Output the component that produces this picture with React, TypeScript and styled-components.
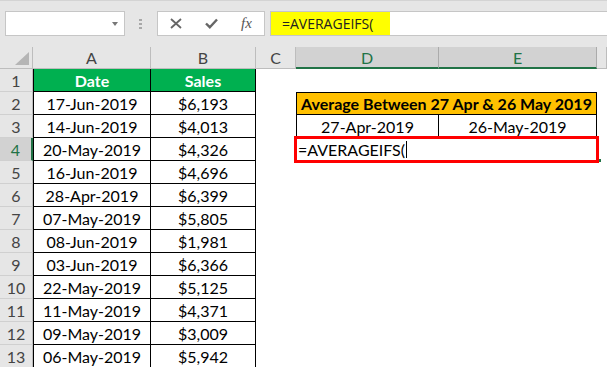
import React from 'react';
import styled, { createGlobalStyle, css } from 'styled-components';

// =============================================================================
// Data
// =============================================================================

const SALES: [string, string][] = [
  ['17-Jun-2019', '$6,193'],
  ['14-Jun-2019', '$4,013'],
  ['20-May-2019', '$4,326'],
  ['16-Jun-2019', '$4,696'],
  ['28-Apr-2019', '$6,399'],
  ['07-May-2019', '$5,805'],
  ['08-Jun-2019', '$1,981'],
  ['03-Jun-2019', '$6,366'],
  ['22-May-2019', '$5,125'],
  ['11-May-2019', '$4,371'],
  ['09-May-2019', '$3,009'],
  ['06-May-2019', '$5,942'],
];

const GREEN = '#217346';
const GRID = '#bdbdbd';
const CELL_FONT = 'Lato, "Liberation Sans", sans-serif';

// =============================================================================
// Styled Components
// =============================================================================

const GlobalStyle = createGlobalStyle`
  html, body {
    margin: 0;
    padding: 0;
    background: #fff;
    overflow: hidden;
  }
  body {
    font-family: ${CELL_FONT};
  }
`;

const Page = styled.div`
  width: 607px;
  height: 367px;
  overflow: hidden;
  display: flex;
  flex-direction: column;
`;

const Toolbar = styled.div`
  flex: none;
  height: 47px;
  box-sizing: border-box;
  background: #e6e6e6;
  border-top: 1px solid #d4d4d4;
  display: flex;
  align-items: flex-start;
  padding: 10px 0 0 5px;
`;

const Box = styled.div`
  height: 25px;
  box-sizing: border-box;
  background: #fff;
  border: 1px solid #c6c6c6;
  display: flex;
  align-items: center;
`;

const NameBox = styled(Box)`
  width: 120px;
  justify-content: flex-end;
  padding-right: 6px;
`;

const DropArrow = styled.div`
  width: 0;
  height: 0;
  border-left: 3.5px solid transparent;
  border-right: 3.5px solid transparent;
  border-top: 4px solid #777;
`;

const Dots = styled.div`
  display: flex;
  flex-direction: column;
  gap: 2px;
  margin: 8px 15px 0 14px;
  & > span {
    width: 3px;
    height: 2px;
    background: #a8a8a8;
  }
`;

const FxButtons = styled(Box)`
  width: 108px;
  justify-content: space-around;
  color: #666;
`;

const FxLabel = styled.span`
  font-family: "Liberation Serif", serif;
  font-style: italic;
  font-size: 15px;
  color: #555;
  width: 12px;
  text-align: center;
`;

const FormulaBar = styled(Box)`
  flex: 1;
  margin-left: 5px;
  border-right: none;
  align-items: stretch;
`;

const Highlight = styled.div`
  width: 119px;
  box-sizing: border-box;
  background: #ffff00;
  padding-left: 11px;
  display: flex;
  align-items: center;
  font-family: "Open Sans", sans-serif;
  font-size: 14px;
  color: #222;
`;

const Sheet = styled.div`
  display: grid;
  grid-template-columns: 33px 118px 105px 40px 143px 158px 1fr;
  grid-template-rows: 22px;
  grid-auto-rows: 23px;
  font-family: ${CELL_FONT};
`;

const Corner = styled.div`
  background: #e6e6e6;
  border-right: 1px solid ${GRID};
  border-bottom: 1px solid ${GRID};
  display: flex;
  justify-content: flex-end;
  align-items: flex-end;
  padding: 0 3px 3px 0;
  &::after {
    content: '';
    width: 0;
    height: 0;
    border-left: 14px solid transparent;
    border-bottom: 13px solid #b5b5b5;
  }
`;

const ColHead = styled.div<{ $active?: boolean }>`
  background: ${(p) => (p.$active ? '#d2d2d2' : '#e6e6e6')};
  color: ${(p) => (p.$active ? GREEN : '#444')};
  border-right: 1px solid ${(p) => (p.$active ? '#ababab' : GRID)};
  border-bottom: ${(p) => (p.$active ? `2px solid ${GREEN}` : `1px solid ${GRID}`)};
  display: flex;
  align-items: center;
  justify-content: center;
  font-size: 16px;
`;

const RowHead = styled.div<{ $active?: boolean }>`
  background: ${(p) => (p.$active ? '#d2d2d2' : '#e6e6e6')};
  color: ${(p) => (p.$active ? GREEN : '#444')};
  border-right: ${(p) => (p.$active ? `2px solid ${GREEN}` : `1px solid ${GRID}`)};
  border-bottom: 1px solid #d0d0d0;
  display: flex;
  align-items: center;
  justify-content: center;
  font-size: 16px;
`;

const Cell = styled.div<{ $bg?: string; $bold?: boolean; $edges?: string; $span?: number; $white?: boolean }>`
  box-sizing: border-box;
  background: ${(p) => p.$bg || '#fff'};
  color: ${(p) => (p.$white ? '#fff' : '#000')};
  font-weight: ${(p) => (p.$bold ? 700 : 400)};
  font-size: 16px;
  white-space: nowrap;
  display: flex;
  align-items: center;
  justify-content: center;
  grid-column: span ${(p) => p.$span || 1};
  ${(p) => p.$edges?.includes('t') && css`border-top: 1px solid #000;`}
  ${(p) => p.$edges?.includes('r') && css`border-right: 1px solid #000;`}
  ${(p) => p.$edges?.includes('b') && css`border-bottom: 1px solid #000;`}
  ${(p) => p.$edges?.includes('l') && css`border-left: 1px solid #000;`}
`;

const EditCell = styled.div`
  grid-column: span 2;
  position: relative;
  z-index: 1;
  background: #fff;
  box-shadow: 0 0 0 2px #ff0000, inset 0 0 0 1px #ff0000;
  display: flex;
  align-items: center;
  padding-left: 2px;
  font-size: 16px;
  color: #000;
`;

const Caret = styled.span`
  display: inline-block;
  width: 1px;
  height: 17px;
  margin-left: 1px;
  background: #000;
`;

const FillHandle = styled.span`
  position: absolute;
  right: -4px;
  bottom: -1px;
  width: 2px;
  height: 3px;
  background: ${GREEN};
`;

// =============================================================================
// Main Component
// =============================================================================

const XIcon = () => (
  <svg width="12" height="11" viewBox="0 0 12 11">
    <path d="M1 1 L11 10 M11 1 L1 10" stroke="#666" strokeWidth="1.8" fill="none" />
  </svg>
);

const CheckIcon = () => (
  <svg width="13" height="11" viewBox="0 0 13 11">
    <path d="M1 5.5 L4.8 9.2 L12 1.5" stroke="#666" strokeWidth="2.4" fill="none" />
  </svg>
);

const App = () => {
  const extra = (row: number) => {
    if (row === 2)
      return (
        <Cell $bg="#ffc000" $bold $span={2} $edges="tlrb">
          Average Between 27 Apr &amp; 26 May 2019
        </Cell>
      );
    if (row === 3)
      return (
        <>
          <Cell $edges="lrb">27-Apr-2019</Cell>
          <Cell $edges="rb">26-May-2019</Cell>
        </>
      );
    if (row === 4)
      return (
        <EditCell>
          =AVERAGEIFS(
          <Caret />
          <FillHandle />
        </EditCell>
      );
    return (
      <>
        <Cell />
        <Cell />
      </>
    );
  };

  return (
    <Page>
      <GlobalStyle />
      <Toolbar>
        <NameBox>
          <DropArrow />
        </NameBox>
        <Dots>
          <span />
          <span />
          <span />
        </Dots>
        <FxButtons>
          <XIcon />
          <CheckIcon />
          <FxLabel>fx</FxLabel>
        </FxButtons>
        <FormulaBar>
          <Highlight>=AVERAGEIFS(</Highlight>
        </FormulaBar>
      </Toolbar>

      <Sheet>
        <Corner />
        <ColHead>A</ColHead>
        <ColHead>B</ColHead>
        <ColHead>C</ColHead>
        <ColHead $active>D</ColHead>
        <ColHead $active>E</ColHead>
        <ColHead />

        <RowHead>1</RowHead>
        <Cell $bg="#00b050" $white $bold $edges="lrb">Date</Cell>
        <Cell $bg="#00b050" $white $bold $edges="rb">Sales</Cell>
        <Cell />
        <Cell />
        <Cell />
        <Cell />

        {SALES.map(([date, amount], i) => {
          const row = i + 2;
          return (
            <React.Fragment key={row}>
              <RowHead $active={row === 4}>{row}</RowHead>
              <Cell $edges="lrb">{date}</Cell>
              <Cell $edges="rb">{amount}</Cell>
              <Cell />
              {extra(row)}
              <Cell />
            </React.Fragment>
          );
        })}
      </Sheet>
    </Page>
  );
};

export default App;
